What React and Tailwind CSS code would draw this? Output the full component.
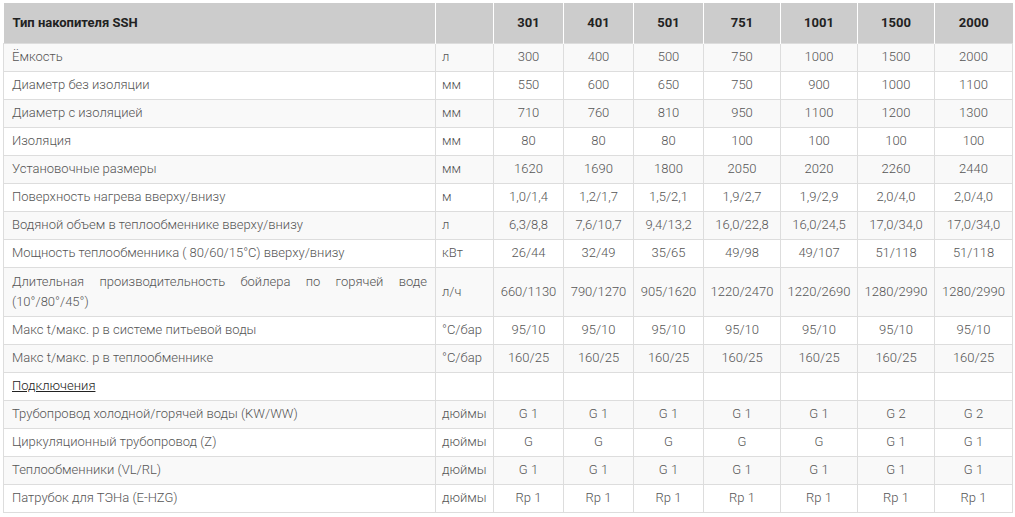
import React from 'react';

// Таблица характеристик накопителей SSH
const models = ['301', '401', '501', '751', '1001', '1500', '2000'];

const rows = [
  { name: 'Ёмкость', unit: 'л', vals: ['300', '400', '500', '750', '1000', '1500', '2000'] },
  { name: 'Диаметр без изоляции', unit: 'мм', vals: ['550', '600', '650', '750', '900', '1000', '1100'] },
  { name: 'Диаметр с изоляцией', unit: 'мм', vals: ['710', '760', '810', '950', '1100', '1200', '1300'] },
  { name: 'Изоляция', unit: 'мм', vals: ['80', '80', '80', '100', '100', '100', '100'] },
  { name: 'Установочные размеры', unit: 'мм', vals: ['1620', '1690', '1800', '2050', '2020', '2260', '2440'] },
  { name: 'Поверхность нагрева вверху/внизу', unit: 'м', vals: ['1,0/1,4', '1,2/1,7', '1,5/2,1', '1,9/2,7', '1,9/2,9', '2,0/4,0', '2,0/4,0'] },
  { name: 'Водяной объем в теплообменнике вверху/внизу', unit: 'л', vals: ['6,3/8,8', '7,6/10,7', '9,4/13,2', '16,0/22,8', '16,0/24,5', '17,0/34,0', '17,0/34,0'] },
  { name: 'Мощность теплообменника ( 80/60/15°С) вверху/внизу', unit: 'кВт', vals: ['26/44', '32/49', '35/65', '49/98', '49/107', '51/118', '51/118'] },
  { name: 'Длительная производительность бойлера по горячей воде (10°/80°/45°)', unit: 'л/ч', vals: ['660/1130', '790/1270', '905/1620', '1220/2470', '1220/2690', '1280/2990', '1280/2990'], tall: true },
  { name: 'Макс t/макс. р в системе питьевой воды', unit: '°C/бар', vals: ['95/10', '95/10', '95/10', '95/10', '95/10', '95/10', '95/10'] },
  { name: 'Макс t/макс. р в теплообменнике', unit: '°C/бар', vals: ['160/25', '160/25', '160/25', '160/25', '160/25', '160/25', '160/25'] },
  { name: 'Подключения', unit: '', vals: ['', '', '', '', '', '', ''], section: true },
  { name: 'Трубопровод холодной/горячей воды (KW/WW)', unit: 'дюймы', vals: ['G 1', 'G 1', 'G 1', 'G 1', 'G 1', 'G 2', 'G 2'] },
  { name: 'Циркуляционный трубопровод (Z)', unit: 'дюймы', vals: ['G', 'G', 'G', 'G', 'G', 'G 1', 'G 1'] },
  { name: 'Теплообменники (VL/RL)', unit: 'дюймы', vals: ['G 1', 'G 1', 'G 1', 'G 1', 'G 1', 'G 1', 'G 1'] },
  { name: 'Патрубок для ТЭНа (E-HZG)', unit: 'дюймы', vals: ['Rp 1', 'Rp 1', 'Rp 1', 'Rp 1', 'Rp 1', 'Rp 1', 'Rp 1'] },
];

const colWidths = ['w-[432px]', 'w-[58px]', 'w-[70px]', 'w-[70px]', 'w-[70px]', 'w-[77px]', 'w-[77px]', 'w-[77px]', 'w-[78px]'];

const App = () => {
  return (
    <div className="min-h-screen bg-white pl-[3px] pt-[3px] font-['Roboto',sans-serif] text-[13px]">
      <table className="w-[1009px] table-fixed border-collapse">
        <colgroup>
          {colWidths.map((w, i) => (
            <col key={i} className={w} />
          ))}
        </colgroup>
        <thead>
          <tr className="h-[40px] bg-[#cccccc] text-[#222]">
            <th className="border-r border-white px-[9px] text-left font-bold">Тип накопителя SSH</th>
            <th className="border-r border-white"></th>
            {models.map((m, i) => (
              <th key={m} className={`text-center font-bold ${i < models.length - 1 ? 'border-r border-white' : ''}`}>
                {m}
              </th>
            ))}
          </tr>
        </thead>
        <tbody className="font-light text-[#555]">
          {rows.map((r, idx) => (
            <tr key={r.name} className={`${r.tall ? 'h-[49px]' : 'h-[28px]'} ${idx % 2 === 0 ? 'bg-[#f9f9f9]' : 'bg-white'}`}>
              <td className={`border border-[#dddddd] px-[8px] leading-[20px] ${r.tall ? 'text-justify' : ''}`}>
                {r.section ? <span className="text-[#222] underline">{r.name}</span> : r.name}
              </td>
              <td className="border border-[#dddddd] px-[6px]">{r.unit}</td>
              {r.vals.map((v, i) => (
                <td key={i} className="border border-[#dddddd] text-center">
                  {v}
                </td>
              ))}
            </tr>
          ))}
        </tbody>
      </table>
    </div>
  );
};

export default App;
